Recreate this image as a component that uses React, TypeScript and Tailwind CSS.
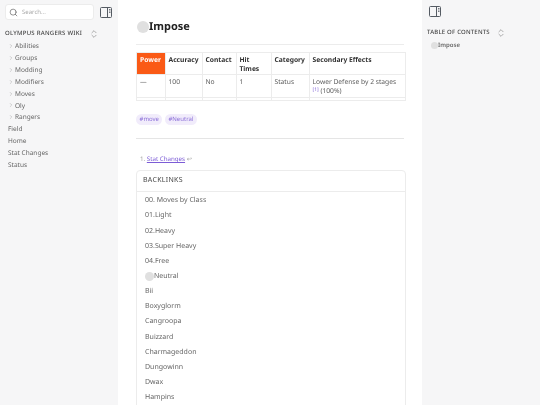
import React from 'react';
import { ChevronRight, ChevronsUpDown, Search } from 'lucide-react';

const folders = ['Abilities', 'Groups', 'Modding', 'Modifiers', 'Moves', 'Oly', 'Rangers'];
const pages = ['Field', 'Home', 'Stat Changes', 'Status'];
const backlinks = ['00. Moves by Class', '01.Light', '02.Heavy', '03.Super Heavy', '04.Free', 'Neutral', 'Bii', 'Boxyglorm', 'Cangroopa', 'Buizzard', 'Charmageddon', 'Dungowinn', 'Dwax', 'Hampins'];

const columns = [
  { label: 'Power', width: 'w-[28.5px]', value: '—' },
  { label: 'Accuracy', width: 'w-[37px]', value: '100' },
  { label: 'Contact', width: 'w-[34px]', value: 'No' },
  { label: 'Hit Times', width: 'w-[35px]', value: '1' },
  { label: 'Category', width: 'w-[38px]', value: 'Status' },
];

const Dot = ({ className }: { className: string }) => (
  <span className={`inline-block shrink-0 rounded-full bg-[#e0e0e0] ${className}`} />
);

const PanelIcon = () => (
  <svg width="12" height="11" viewBox="0 0 12 11" fill="none" stroke="#555b63" strokeWidth="1">
    <rect x="0.5" y="0.5" width="11" height="10" rx="1" />
    <path d="M7.5 0.5V10.5" />
    <path d="M9 2.5H10.5M9 4H10.5M9 5.5H10.5" strokeWidth="0.8" />
  </svg>
);

const App: React.FC = () => {
  return (
    <div className="flex h-[405px] w-[540px] overflow-hidden bg-white font-['Noto_Sans',sans-serif] text-[#5c5c5c] [text-rendering:geometricPrecision] [will-change:transform]">
      {/* Left sidebar */}
      <aside className="w-[118px] shrink-0 bg-[#f6f6f7] pl-[5px] pr-[6px] pt-[4px]">
        <div className="flex items-center gap-[6px]">
          <div className="flex h-[16px] w-[89px] items-center gap-[4px] rounded-[3px] border border-[#ececec] bg-white pl-[3px]">
            <Search size={9} strokeWidth={1.5} className="text-[#444]" />
            <span className="text-[6px] text-[#a8a8a8]">Search...</span>
          </div>
          <PanelIcon />
        </div>
        <div className="mt-[6px] flex h-[15px] items-center text-[6px] font-medium tracking-[0.25px] text-[#444]">
          <span className="w-[84px] whitespace-nowrap">OLYMPUS RANGERS WIKI</span>
          <ChevronsUpDown size={10} strokeWidth={1} />
        </div>
        <ul className="-mt-[1px] text-[6.5px] text-[#666]">
          {folders.map((name) => (
            <li key={name} className="flex h-[11.9px] items-center pl-[3px]">
              <ChevronRight size={6} strokeWidth={1.5} className="mr-[1px] text-[#888]" />
              <span>{name}</span>
            </li>
          ))}
          {pages.map((name) => (
            <li key={name} className="flex h-[11.9px] items-center pl-[3px]">
              {name}
            </li>
          ))}
        </ul>
      </aside>

      {/* Article */}
      <main className="w-[304px] shrink-0 px-[18px]">
        <h1 className="mt-[18px] flex h-[17px] items-center pl-[1px] text-[11px] font-bold text-[#222]">
          <Dot className="size-[12px]" />
          <span className="pt-[1px]">Impose</span>
        </h1>
        <hr className="mt-[9px] border-[#ececec]" />
        <div className="mt-[7px] flex h-[49px] w-[270px] border-b border-r border-[#ececec] text-[6.7px] text-[#5c5c5c]">
          {columns.map((col, i) => (
            <div key={col.label} className={`flex flex-col border-l border-t border-[#ececec] ${col.width}`}>
              <div className={`h-[21px] px-[3px] pt-[1.5px] font-bold leading-[9px] ${i === 0 ? 'bg-[#fa5a16] text-white' : 'text-[#333]'}`}>
                {col.label}
              </div>
              <div className="h-[23px] border-t border-[#ececec] px-[3px] pt-[1.5px] leading-[9.5px]">{col.value}</div>
              <div className="flex-1 border-t border-[#ececec]" />
            </div>
          ))}
          <div className="flex flex-1 flex-col border-l border-t border-[#ececec]">
            <div className="h-[21px] px-[3px] pt-[1.5px] font-bold leading-[9px] text-[#333]">Secondary Effects</div>
            <div className="h-[23px] border-t border-[#ececec] px-[3px] pt-[1.5px] leading-[9.5px]">
              Lower Defense by 2 stages <sup className="text-[5px] text-[#7c5cd6]">[1]</sup> (100%)
            </div>
            <div className="flex-1 border-t border-[#ececec]" />
          </div>
        </div>
        <div className="mt-[13px] flex gap-[2.5px] text-[6px] text-[#8b6fd8]">
          <span className="flex h-[11px] items-center rounded-full bg-[#f1ecfb] px-[3.5px]">#move</span>
          <span className="flex h-[11px] items-center rounded-full bg-[#f1ecfb] px-[3.5px]">#Neutral</span>
        </div>
        <hr className="mt-[13px] border-[#e5e5e5]" />
        <p className="mt-[15px] pl-[4px] text-[6.2px] leading-[9px] text-[#a3a3a3]">
          1. <span className="text-[#7c5cd6] underline">Stat Changes</span> ↩
        </p>
        <section className="mt-[7px] h-[300px] w-[270px] rounded-t-[4px] border border-[#ececec]">
          <div className="flex h-[21px] items-center border-b border-[#ececec] pl-[6px] text-[7px] tracking-[0.3px] text-[#444]">
            BACKLINKS
          </div>
          <ul className="pl-[8px] pt-[2px] text-[7px] text-[#666]">
            {backlinks.map((name) => (
              <li key={name} className="flex h-[15.15px] items-center">
                {name === 'Neutral' && <Dot className="-mt-[1px] size-[9px]" />}
                {name}
              </li>
            ))}
          </ul>
        </section>
      </main>

      {/* Right panel */}
      <aside className="flex-1 bg-[#f6f6f7] pl-[5px] pt-[6px]">
        <div className="pl-[2px]">
          <PanelIcon />
        </div>
        <div className="mt-[8px] flex h-[15px] items-center whitespace-nowrap text-[6px] font-medium tracking-[0.2px] text-[#444]">
          TABLE OF CONTENTS
          <ChevronsUpDown size={10} strokeWidth={1} className="ml-[6px]" />
        </div>
        <div className="ml-[4px] mt-[1px] flex items-center text-[6px] font-semibold text-[#666]">
          <Dot className="size-[7px]" />
          Impose
        </div>
      </aside>
    </div>
  );
};

export default App;
